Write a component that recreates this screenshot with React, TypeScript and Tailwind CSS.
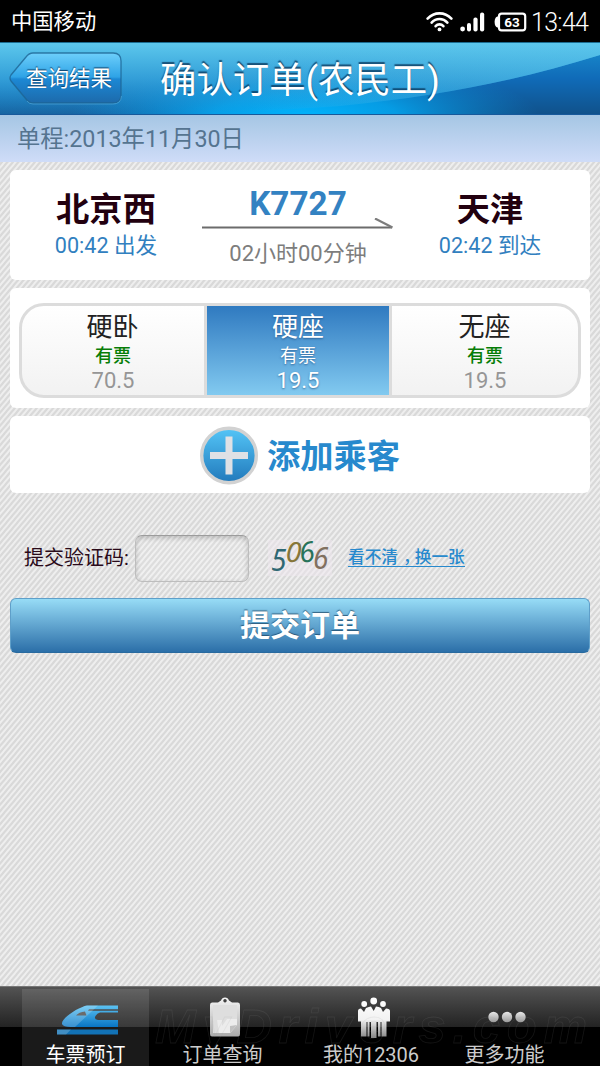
import React from "react";

function WifiIcon() {
  return (
    <svg width="27" height="20" viewBox="0 0 27 20" fill="none" stroke="#fff" strokeWidth="2.6" strokeLinecap="round">
      <path d="M1.6 6.6C8.2-.4 18.8-.4 25.4 6.6" />
      <path d="M5.6 10.6c4.4-4.8 11.4-4.8 15.8 0" />
      <path d="M9.6 14.2c2.2-2.4 5.6-2.4 7.8 0" />
      <circle cx="13.5" cy="17.4" r="1.9" fill="#fff" stroke="none" />
    </svg>
  );
}

function SignalIcon() {
  return (
    <svg width="25" height="20" viewBox="0 0 25 20" fill="#fff">
      <circle cx="2.6" cy="17" r="2.4" />
      <rect x="7" y="11" width="4" height="8.6" rx="2" />
      <rect x="13.4" y="5.4" width="4.2" height="14.2" rx="2" />
      <rect x="20" y="0.6" width="4.2" height="19" rx="2" />
    </svg>
  );
}

function BatteryIcon() {
  return (
    <svg width="33" height="20" viewBox="0 0 33 20">
      <rect x="5" y="1.6" width="26.2" height="16.8" rx="2.6" fill="none" stroke="#fff" strokeWidth="2.2" />
      <path d="M4.600 4.500H3.400C2 4.500 .6 6.800 .6 10s1.400 5.500 2.800 5.500H4.600z" fill="#fff" />
      <text x="17.900" y="14.800" textAnchor="middle" fontFamily="Roboto" fontWeight="700" fontSize="13.500" fill="#fff">63</text>
    </svg>
  );
}

function StatusBar() {
  return (
    <div className="flex h-[42px] items-center bg-black pl-[11px] pr-[10px] text-white">
      <span className="pt-[2px] text-[21.3px] leading-[42px]">中国移动</span>
      <div className="ml-auto flex items-center pt-[2px]">
        <WifiIcon />
        <div className="ml-[7px] flex"><SignalIcon /></div>
        <div className="ml-[9px] flex"><BatteryIcon /></div>
        <span className="ml-[4px] w-[59px] whitespace-nowrap pt-[2px] text-[25px] font-light leading-[38px] tracking-[-0.7px]">13:44</span>
      </div>
    </div>
  );
}

function Header() {
  return (
    <header className="relative flex h-[73px] items-center overflow-hidden">
      <svg className="absolute inset-0" width="600" height="73" viewBox="0 0 600 73">
        <defs>
          <linearGradient id="hb" x1="0" y1="0" x2="0" y2="1">
            <stop offset="0" stopColor="#38ade0" />
            <stop offset=".5" stopColor="#1c84cb" />
            <stop offset="1" stopColor="#17639f" />
          </linearGradient>
          <linearGradient id="hd" x1="0" y1="0" x2="0" y2="1">
            <stop offset="0" stopColor="#1a90d0" />
            <stop offset=".5" stopColor="#106bb8" />
            <stop offset="1" stopColor="#10518a" />
          </linearGradient>
          <radialGradient id="hg" gradientUnits="userSpaceOnUse" cx="0" cy="0" r="1" gradientTransform="translate(305 76) scale(235 58)">
            <stop offset="0" stopColor="#00b6ff" />
            <stop offset=".4" stopColor="#04a8f2" stopOpacity=".85" />
            <stop offset="1" stopColor="#0a90dc" stopOpacity="0" />
          </radialGradient>
          <linearGradient id="hs" x1="0" y1="0" x2="0" y2="1">
            <stop offset="0" stopColor="#67cff0" />
            <stop offset=".5" stopColor="#40addf" stopOpacity=".8" />
            <stop offset="1" stopColor="#2095d8" stopOpacity="0" />
          </linearGradient>
          <linearGradient id="hr" x1="0" y1="0" x2="1" y2="0">
            <stop offset="0" stopColor="#5cc6ec" stopOpacity="0" />
            <stop offset="1" stopColor="#5cc6ec" stopOpacity=".35" />
          </linearGradient>
        </defs>
        <rect width="600" height="73" fill="url(#hb)" />
        <path d="M600 0V73H260L340 64C440 54 520 38 600 13z" fill="url(#hd)" />
        <rect width="600" height="73" fill="url(#hg)" />
        <path d="M0 0H600V13C520 38 440 54 340 64Q200 73 0 73z" fill="url(#hs)" opacity=".8" />
        <path d="M250 0H600V13C520 38 440 54 340 64L250 70z" fill="url(#hr)" />
        <rect width="600" height="1" fill="#1b6c91" />
        <rect y="72" width="600" height="1" fill="#17599b" />
      </svg>
      <button className="relative ml-[9px] flex h-[53px] w-[113px] items-center pl-[17px]">
        <svg className="absolute inset-0" width="113" height="53" viewBox="0 0 113 53">
          <defs>
            <linearGradient id="bb" x1="0" y1="0" x2="0" y2="1">
              <stop offset="0" stopColor="#6dcffb" />
              <stop offset=".48" stopColor="#2ea3e6" />
              <stop offset=".52" stopColor="#1c88d4" />
              <stop offset="1" stopColor="#1d6aab" />
            </linearGradient>
          </defs>
          <path d="M24 1H104Q112 1 112 9V43Q112 51 104 51H24Q20 51 17 47L2 29Q0 26 2 23L17 5Q20 1 24 1z" fill="url(#bb)" stroke="#1d6493" strokeOpacity=".8" strokeWidth="1.300" />
          <path d="M18 49Q20 52 24 52H104Q112 52 112.500 44" fill="none" stroke="#4fa6d8" strokeOpacity=".7" />
        </svg>
        <span className="relative text-[21.5px] leading-[53px] text-white [text-shadow:0_-1px_1px_#0b3c66]">查询结果</span>
      </button>
      <h1 className="relative ml-[38px] whitespace-nowrap pt-[4px] text-[36.4px] leading-[73px] text-white [text-shadow:0_-2px_1px_rgba(8,50,85,0.75)]">确认订单(农民工)</h1>
    </header>
  );
}

function Station({ name, time }: { name: string; time: string }) {
  return (
    <div className="flex w-[192px] flex-col items-center pt-[19px]">
      <div className="text-[33.3px] font-bold leading-[41px] text-[#22000f]">{name}</div>
      <div className="text-[21.6px] leading-[32px] text-[#3180bf]">{time}</div>
    </div>
  );
}

function Trip() {
  return (
    <section className="flex h-[110px] rounded-[6px] bg-white">
      <Station name="北京西" time="00:42 出发" />
      <div className="flex w-[192px] flex-col items-center pt-[17px]">
        <div className="text-[33.3px] font-bold leading-[34px] text-[#3382c2]">K7727</div>
        <svg className="-mt-[3px] shrink-0" width="192" height="19" viewBox="0 0 192 19" fill="none">
          <path d="M0 9.500H190" stroke="#6c6c6c" strokeWidth="2" />
          <path d="M173 .5L190.500 9.500" stroke="#7c7c7c" strokeWidth="2.200" />
        </svg>
        <div className="text-[22px] leading-[34px] text-[#7d7d7d]">02小时00分钟</div>
      </div>
      <Station name="天津" time="02:42 到达" />
    </section>
  );
}

function Seat({ name, price, active = false }: { name: string; price: string; active?: boolean }) {
  return (
    <div
      className={
        active
          ? "flex w-[188px] flex-col items-center border-x-[3px] border-[#dcdcdc] bg-gradient-to-b from-[#2f7ac0] to-[#82caf0] pt-[6px] text-white [text-shadow:0_1px_2px_rgba(20,60,110,0.6)]"
          : "flex w-[182px] flex-col items-center pt-[6px] last:w-[186px]"
      }
    >
      <div className={active ? "text-[26px] leading-[31px]" : "pr-px text-[26px] leading-[31px] text-[#222]"}>{name}</div>
      <div className={active ? "text-[18px] leading-[26px]" : "text-[18px] font-medium leading-[26px] text-[#067d06]"}>{"有票"}</div>
      <div className={active ? "text-[22px] leading-[23px]" : "text-[22px] leading-[23px] text-[#969696]"}>{price}</div>
    </div>
  );
}

function Captcha() {
  return (
    <div className="relative h-[36px] w-[64px] bg-[#f0e8f0]/50 font-['Noto_Sans'] text-[28px] italic leading-[28px]">
      <span className="absolute left-[3px] top-[5px] scale-y-110 text-[#306874]">5</span>
      <span className="absolute left-[18px] top-[-3px] rotate-[4deg] text-[#86763a]">0</span>
      <span className="absolute left-[31px] top-[-3px] rotate-[-8deg] text-[#28735a]">6</span>
      <span className="absolute left-[45px] top-[3px] scale-y-110 text-[#817060]">6</span>
    </div>
  );
}

function TrainIcon() {
  return (
    <svg width="61" height="30" viewBox="0 0 61 30">
      <defs>
        <linearGradient id="tr" x1="0" y1="0" x2="0" y2="1">
          <stop offset="0" stopColor="#5cc2f2" />
          <stop offset="1" stopColor="#0875c4" />
        </linearGradient>
      </defs>
      <path fillRule="evenodd" d="M61 .5H30C22 2 4 13 5 19Q6 22 14 22H61V15H41Q36.500 14 38.500 11Q40 8 43 7.500H61V5.800H31L32 4.200H61zM19 10.500Q22 7 28 6.500L29.500 10.500z" fill="url(#tr)" />
      <path d="M0 24.500H61V29.500H0z" fill="#1272b5" />
      <path d="M30 .5C22 2 4 13 5 19Q6 22 14 22H18L41 .5z" fill="#fff" opacity=".2" />
      <path d="M0 24.500H14L9 29.500H0z" fill="#fff" opacity=".2" />
    </svg>
  );
}

function ClipboardIcon() {
  return (
    <svg width="32" height="40" viewBox="0 0 32 40">
      <defs>
        <linearGradient id="cl" x1="0" y1="0" x2="0" y2="1">
          <stop offset="0" stopColor="#f4f4f4" />
          <stop offset="1" stopColor="#aaa" />
        </linearGradient>
      </defs>
      <path fillRule="evenodd" d="M3 5.500H9L12 3.500Q13 .5 16 .5T20 3.500L23 5.500H29Q31 5.500 31 8V37Q31 39.500 29 39.500H3Q1 39.500 1 37V8Q1 5.500 3 5.500zM16 2a1.700 1.700 0 1 0 .01 0z" fill="url(#cl)" />
      <path d="M4 8H28V28L21 36H4z" fill="#dedede" />
      <path d="M8 23H13L13 29 18 22H28V28L21 36H10z" fill="#efefef" opacity=".8" />
      <path d="M28 28L21 36V29z" fill="#c0c0c0" />
    </svg>
  );
}

function PeopleIcon() {
  return (
    <svg width="34" height="41" viewBox="0 0 34 41">
      <defs>
        <linearGradient id="pp" gradientUnits="userSpaceOnUse" x1="0" y1="0" x2="0" y2="41">
          <stop offset="0" stopColor="#fff" />
          <stop offset=".55" stopColor="#f2f2f2" />
          <stop offset="1" stopColor="#858585" />
        </linearGradient>
      </defs>
      <g fill="url(#pp)">
        <circle cx="16.700" cy="4" r="3.400" />
        <circle cx="7.200" cy="7" r="2.900" />
        <circle cx="26" cy="7" r="2.900" />
        <path d="M1 14Q1 11.500 4 11.500L7 15 9 11Q12 9.500 14 9.500L16.700 14 19 9.500Q22 9.500 24 11L26 15 29 11.500Q33 11.500 33 14V24.500H29.500V39.500H24.500V25H23.500V39.500H21V25H19.500V41H14V25H12.500V39.500H10.500V25H9.500V39.500H4V24.500H1z" />
      </g>
    </svg>
  );
}

function DotsIcon() {
  return (
    <svg width="38" height="12" viewBox="0 0 38 12">
      <defs>
        <linearGradient id="dt" x1="0" y1="0" x2="0" y2="1">
          <stop offset="0" stopColor="#e8e8e8" />
          <stop offset="1" stopColor="#9a9a9a" />
        </linearGradient>
      </defs>
      <g fill="url(#dt)">
        <circle cx="5.500" cy="6" r="5.200" />
        <circle cx="19" cy="6" r="5.200" />
        <circle cx="32.500" cy="6" r="5.200" />
      </g>
    </svg>
  );
}

function TabBar() {
  return (
    <nav className="relative flex h-[80px] shrink-0 bg-black bg-gradient-to-b from-[#555] to-[#232323] bg-[length:100%_41px] bg-no-repeat pl-[22px] pt-[3px] shadow-[inset_0_1px_0_#777]">
      <div className="flex w-[127px] flex-col items-center bg-white/10">
        <div className="flex h-[52px] shrink-0 items-start pl-[3px] pt-[16px]"><TrainIcon /></div>
        <div className="h-[25px] whitespace-nowrap text-[20px] leading-[29px] text-white">车票预订</div>
      </div>
      <div className="flex w-[147px] flex-col items-center">
        <div className="flex h-[52px] shrink-0 items-start pl-[4px] pt-[8px]"><ClipboardIcon /></div>
        <div className="h-[25px] whitespace-nowrap text-[20px] leading-[29px] text-[#ccc]">订单查询</div>
      </div>
      <div className="flex w-[150px] flex-col items-center">
        <div className="flex h-[52px] shrink-0 items-start pl-[5px] pt-[8px]"><PeopleIcon /></div>
        <div className="h-[25px] whitespace-nowrap text-[20px] leading-[29px] text-[#ccc]">我的12306</div>
      </div>
      <div className="flex w-[117px] flex-col items-center">
        <div className="flex h-[52px] shrink-0 items-start pl-[4px] pt-[22px]"><DotsIcon /></div>
        <div className="h-[25px] whitespace-nowrap text-[20px] leading-[29px] text-[#ccc]">更多功能</div>
      </div>
      <svg className="pointer-events-none absolute inset-0" width="600" height="80" viewBox="0 0 600 80">
        <text x="155" y="57" textLength="432" fontFamily="Liberation Sans" fontStyle="italic" fontWeight="700" fontSize="49" fill="none" stroke="#999" strokeOpacity=".13" strokeWidth=".8">MyDrivers.com</text>
      </svg>
    </nav>
  );
}

export default function App() {
  return (
    <div className="flex h-[1066px] w-[600px] flex-col overflow-hidden bg-[repeating-linear-gradient(130deg,#d9d9d9_0_1.3px,#eeeeee_2.2px_3.3px,#d9d9d9_4.2px)] font-[Roboto,'Noto_Sans_CJK_SC',sans-serif]">
      <StatusBar />
      <Header />
      <div className="h-[47px] bg-gradient-to-b from-[#a5c6e4] to-[#cfdcf8] pl-[17px] text-[23.3px] leading-[48px] text-[#557490]">单程:2013年11月30日</div>
      <main className="flex flex-1 flex-col px-[10px] pt-[8px]">
        <Trip />
        <section className="mt-[8px] h-[120px] rounded-[6px] bg-white px-[9px] pt-[15px]">
          <div className="flex h-[95px] overflow-hidden rounded-[25px] border-[3px] border-[#dcdcdc] bg-gradient-to-b from-white to-[#f2f2f2]">
            <Seat name="硬卧" price="70.5" />
            <Seat name="硬座" price="19.5" active />
            <Seat name="无座" price="19.5" />
          </div>
        </section>
        <section className="mt-[8px] flex h-[77px] items-center justify-center gap-[9px] rounded-[6px] bg-white">
          <svg className="mt-[2px]" width="58" height="59" viewBox="0 0 58 59">
            <defs>
              <linearGradient id="ad" x1="0" y1="0" x2="0" y2="1">
                <stop offset="0" stopColor="#54c5f7" />
                <stop offset="1" stopColor="#2179bb" />
              </linearGradient>
            </defs>
            <circle cx="29" cy="29.500" r="27.300" fill="url(#ad)" stroke="#d2d2d2" strokeWidth="3.400" />
            <path d="M29 10.500V48.500M10 29.500H48" stroke="#dfe1e5" strokeWidth="7" />
          </svg>
          <span className="pt-[4px] text-[33.3px] font-bold leading-[73px] text-[#2789cd]">添加乘客</span>
        </section>
        <div className="mt-[41px] flex h-[48px] items-center pl-[14px]">
          <label className="w-[111px] whitespace-nowrap text-[20px] leading-[44px] text-[#2a0a1a]">提交验证码:</label>
          <div className="h-[47px] w-[114px] rounded-[7px] border-[1.500px] border-[#bdbdbd] border-t-[#9c9c9c] bg-white/10 shadow-[inset_0_2px_5px_rgba(0,0,0,0.2)]" />
          <div className="ml-[19px]"><Captcha /></div>
          <a className="ml-[16px] whitespace-nowrap border-b-[1.500px] border-[#2789cd] text-[16.7px] font-medium leading-[17px] text-[#2789cd]">看不清<span className="relative left-[5px]">，</span>换一张</a>
        </div>
        <button className="mt-[16px] h-[55px] rounded-[6px] border border-[#5f9fc9] border-b-[#286a9f] bg-gradient-to-b from-[#97dcf6] to-[#2b6fa8] text-[30px] font-bold leading-[53px] text-white [text-shadow:0_-1px_1px_rgba(20,60,90,0.7)]">提交订单</button>
      </main>
      <TabBar />
    </div>
  );
}
